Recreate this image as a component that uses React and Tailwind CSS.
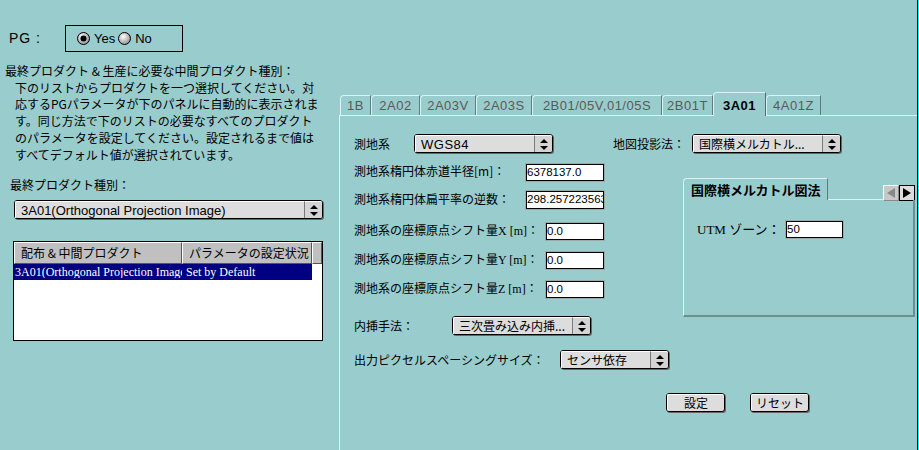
import React from 'react';

const JP = "font-['Noto_Sans_CJK_JP',sans-serif]";
const SANS = "font-['Liberation_Sans','Noto_Sans_CJK_JP',sans-serif]";
const SERIF = "font-['Liberation_Serif','Noto_Sans_CJK_JP',serif]";

const tabs = [
  { label: '1B', w: 'w-[31px]' },
  { label: '2A02', w: 'w-[49px]' },
  { label: '2A03V', w: 'w-[56px]' },
  { label: '2A03S', w: 'w-[56px]' },
  { label: '2B01/05V,01/05S', w: 'w-[130px]' },
  { label: '2B01T', w: 'w-[51px]' },
  { label: '3A01', w: 'w-[53px]', active: true },
  { label: '4A01Z', w: 'w-[55px]' },
];

function Arrows() {
  return (
    <svg width="8" height="11" viewBox="0 0 8 11">
      <path d="M4 0 L8 4 L0 4 Z" fill="#000" />
      <path d="M0 7 L8 7 L4 11 Z" fill="#000" />
    </svg>
  );
}

function Select({ w, children }) {
  return (
    <div className={`flex h-[19px] ${w} shrink-0 rounded-[3px] border border-black bg-[#dddddd] shadow-[1px_1px_0_#666]`}>
      <div className={`flex-1 flex items-center pl-[5px] text-[12px] leading-none whitespace-nowrap overflow-hidden border-t border-l border-white rounded-tl-[2px] ${JP}`}>
        {children}
      </div>
      <div className="w-[18px] border-l border-[#7a7a7a] bg-[#d4d4d4] border-t border-t-white flex items-center justify-center rounded-r-[2px]">
        <Arrows />
      </div>
    </div>
  );
}

function Field({ w, h = 'h-[17px]', value }) {
  return (
    <div className={`${w} ${h} shrink-0 bg-white border border-black shadow-[0_0_0_1px_#9aa] flex items-center text-[11.5px] leading-none overflow-hidden whitespace-nowrap ${SANS}`}>
      {value}
    </div>
  );
}

function Button({ children }) {
  return (
    <div className={`w-[59px] h-[19px] rounded-[3px] border border-black bg-[#dddddd] shadow-[1px_1px_0_#666] flex items-center justify-center text-[12px] leading-none ${JP}`}>
      <span className="w-full h-full flex items-center justify-center border-t border-l border-white rounded-[2px]">{children}</span>
    </div>
  );
}

function Radio({ checked }) {
  return (
    <svg width="13" height="13" viewBox="0 0 13 13">
      <defs>
        <radialGradient id={checked ? 'rg1' : 'rg2'} cx="40%" cy="35%" r="70%">
          <stop offset="0" stopColor="#ffffff" />
          <stop offset="1" stopColor="#8a8a8a" />
        </radialGradient>
      </defs>
      <circle cx="6.5" cy="6.5" r="6" fill={`url(#${checked ? 'rg1' : 'rg2'})`} stroke="#000" strokeWidth="1" />
      {checked && <circle cx="6.5" cy="6.5" r="3" fill="#000" />}
    </svg>
  );
}

export default function App() {
  return (
    <div className={`w-[919px] h-[450px] bg-[#99cccc] flex overflow-hidden text-black ${JP}`}>
      {/* left column */}
      <div className="w-[338px] shrink-0 flex flex-col">
        <div className="mt-[25px] flex items-center">
          <span className={`ml-[9px] w-[56px] text-[14px] tracking-[1px] ${SANS}`}>PG :</span>
          <div className={`w-[118px] h-[27px] border border-black flex items-center pl-[11px] text-[13px] ${SANS}`}>
            <Radio checked />
            <span className="ml-[4px] mr-[3px]">Yes</span>
            <Radio />
            <span className="ml-[4px]">No</span>
          </div>
        </div>

        <div className="mt-[11px] text-[12px] leading-[16.7px] whitespace-nowrap">
          <p className="pl-[5px]">最終プロダクト &amp; 生産に必要な中間プロダクト種別：</p>
          <p className="pl-[15px]">下のリストからプロダクトを一つ選択してください。対</p>
          <p className="pl-[15px]">応するPGパラメータが下のパネルに自動的に表示されま</p>
          <p className="pl-[15px]">す。同じ方法で下のリストの必要なすべてのプロダクト</p>
          <p className="pl-[15px]">のパラメータを設定してください。設定されるまで値は</p>
          <p className="pl-[15px]">すべてデフォルト値が選択されています。</p>
        </div>

        <p className="mt-[13px] pl-[10px] text-[12px] leading-[17px]">最終プロダクト種別：</p>

        <div className="mt-[7px] ml-[14px]">
          <Select w="w-[309px]">
            <span className={`${SANS} text-[13px]`}>3A01(Orthogonal Projection Image)</span>
          </Select>
        </div>

        <div className="mt-[22px] ml-[13px] w-[310px] h-[100px] border border-black bg-white flex flex-col">
          <div className="h-[22px] flex text-[12px]">
            <div className="w-[168px] bg-[#c0c0c0] border-t border-l border-white border-r border-r-[#555] border-b border-b-[#555] flex items-center pl-[6px]">
              配布 &amp; 中間プロダクト
            </div>
            <div className="w-[130px] bg-[#c0c0c0] border-t border-l border-white border-r border-r-[#555] border-b border-b-[#555] flex items-center pl-[6px] whitespace-nowrap overflow-hidden">
              パラメータの設定状況
            </div>
            <div className="flex-1 bg-[#c0c0c0] border-t border-l border-white border-r border-r-[#555] border-b border-b-[#555]" />
          </div>
          <div className={`h-[16px] w-[298px] bg-[#000080] text-white text-[12px] leading-none flex items-center ${SERIF}`}>
            <div className="w-[168px] pl-[1px] overflow-hidden whitespace-nowrap">3A01(Orthogonal Projection Image</div>
            <div className="pl-[4px] whitespace-nowrap">Set by Default</div>
          </div>
        </div>
      </div>

      {/* right: tabbed panel */}
      <div className="flex-1 flex flex-col">
        <div className="mt-[92px] h-[24px] pl-[2px] flex items-end relative z-10 -mb-px">
          {tabs.map((t) =>
            t.active ? (
              <div
                key={t.label}
                className={`${t.w} h-[24px] bg-[#99cccc] border-t border-l border-[#d8f4f4] border-r border-r-[#4f6f6f] rounded-tl-[4px] flex items-start justify-center pt-[3px] text-[13px] font-bold tracking-[0.5px] ${SANS}`}
              >
                {t.label}
              </div>
            ) : (
              <div
                key={t.label}
                className={`${t.w} h-[20px] mb-px border-t border-l border-[#d8f4f4] border-r border-r-[#5d7d7d] rounded-tl-[4px] flex items-center justify-center text-[13px] text-[#5a5a5a] tracking-[0.5px] whitespace-nowrap ${SANS}`}
              >
                {t.label}
              </div>
            )
          )}
        </div>

        <div className="flex-1 ml-px border-t border-l border-[#d8f4f4] pl-[14px] pt-[18px] text-[12px]">
          {/* row 1 */}
          <div className="flex items-center h-[19px]">
            <span className="w-[60px]">測地系</span>
            <Select w="w-[139px]">
              <span className={`${SANS} text-[13px] tracking-[0.5px]`}>WGS84</span>
            </Select>
            <span className="w-[60px]" />
            <span className="w-[79px]">地図投影法：</span>
            <Select w="w-[149px]">国際横メルカトル...</Select>
          </div>

          <div className="flex">
            <div className="w-[329px] flex flex-col">
              <div className="mt-[11px] flex items-start">
                <span className="w-[172px] leading-[13px]">測地系楕円体赤道半径[m]：</span>
                <Field w="w-[78px]" value="6378137.0" />
              </div>
              <div className="mt-[10px] flex items-start">
                <span className="w-[172px] leading-[15px]">測地系楕円体扁平率の逆数：</span>
                <Field w="w-[78px]" h="h-[18px]" value="298.257223563" />
              </div>
              <div className="mt-[14px] flex items-start">
                <span className="w-[192px] leading-[13px]">
                  測地系の座標原点シフト量<span className={SERIF}>X [m]</span>：
                </span>
                <Field w="w-[58px]" value="0.0" />
              </div>
              <div className="mt-[12px] flex items-start">
                <span className="w-[192px] leading-[13px]">
                  測地系の座標原点シフト量<span className={SERIF}>Y [m]</span>：
                </span>
                <Field w="w-[58px]" value="0.0" />
              </div>
              <div className="mt-[12px] flex items-start">
                <span className="w-[192px] leading-[13px]">
                  測地系の座標原点シフト量<span className={SERIF}>Z [m]</span>：
                </span>
                <Field w="w-[58px]" value="0.0" />
              </div>
            </div>

            {/* inner tab panel */}
            <div className="mt-[25px] w-[232px] flex flex-col">
              <div className="h-[22px] flex">
                <div className="w-[145px] border-t border-l border-[#d8f4f4] border-r border-r-[#5d7d7d] rounded-tl-[4px] flex items-center pl-[7px] text-[13px] font-bold whitespace-nowrap">
                  国際横メルカトル図法
                </div>
                <div className="flex-1 border-b border-[#d8f4f4] flex items-end justify-end">
                  <div className="flex -mb-[2px]">
                    <div className="w-[16px] h-[16px] bg-[#c8c8c8] border border-[#888] border-t-white border-l-white flex items-center justify-center">
                      <svg width="10" height="10" viewBox="0 0 10 10"><path d="M9 0 L9 10 L1 5 Z" fill="#888" /></svg>
                    </div>
                    <div className="w-[16px] h-[16px] bg-[#dddddd] border border-black flex items-center justify-center">
                      <svg width="10" height="10" viewBox="0 0 10 10"><path d="M1 0 L1 10 L9 5 Z" fill="#000" /></svg>
                    </div>
                  </div>
                </div>
              </div>
              <div className="h-[117px] border-l border-[#d8f4f4] border-r-2 border-r-[#6f8f8f] border-b-2 border-b-[#6f8f8f]">
                <div className="pt-[20px] pl-[13px] flex items-center">
                  <span className={`w-[89px] text-[13px] ${SERIF}`}>UTM ゾーン：</span>
                  <Field w="w-[57px]" value="50" />
                </div>
              </div>
            </div>
          </div>

          <div className="-mt-px flex items-center h-[19px]">
            <span className="w-[98px]">内挿手法：</span>
            <Select w="w-[139px]">三次畳み込み内挿...</Select>
          </div>

          <div className="mt-[15px] flex items-center h-[19px]">
            <span className="w-[206px]">出力ピクセルスペーシングサイズ：</span>
            <Select w="w-[109px]">センサ依存</Select>
          </div>

          <div className="mt-[24px] ml-[312px] flex gap-[25px]">
            <Button>設定</Button>
            <Button>リセット</Button>
          </div>
        </div>
      </div>

      <div className="w-px shrink-0 bg-black" />
      <div className="w-px shrink-0 bg-[#00ffff]" />
    </div>
  );
}
